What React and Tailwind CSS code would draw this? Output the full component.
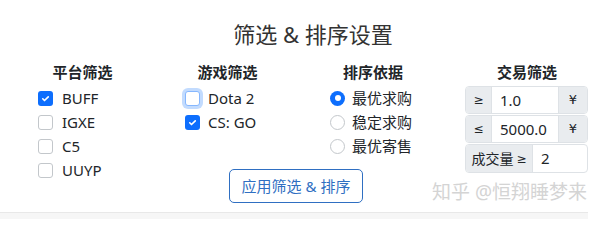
import React, { useState } from 'react';

const platforms = [
  { name: 'BUFF', checked: true },
  { name: 'IGXE', checked: false },
  { name: 'C5', checked: false },
  { name: 'UUYP', checked: false },
];

const games = [
  { name: 'Dota 2', checked: false, focus: true },
  { name: 'CS: GO', checked: true },
];

const sorts = ['最优求购', '稳定求购', '最优寄售'];

const symFont = { fontFamily: '"DejaVu Sans", "Noto Sans", sans-serif' };

function Check({ checked, focus }) {
  if (checked) {
    return (
      <span className="w-[15px] h-[15px] rounded-[3px] bg-[#0d6efd] flex items-center justify-center shrink-0">
        <svg viewBox="0 0 20 20" className="w-[11px] h-[11px]">
          <path d="M5 10.5l3.2 3.2L15 7" fill="none" stroke="white" strokeWidth="3" strokeLinecap="round" strokeLinejoin="round" />
        </svg>
      </span>
    );
  }
  return (
    <span
      className={`w-[15px] h-[15px] rounded-[3px] bg-white border shrink-0 ${
        focus ? 'border-[#86b7fe] shadow-[0_0_0_3px_rgba(13,110,253,0.25)]' : 'border-[#c3c7cb]'
      }`}
    />
  );
}

function Radio({ checked }) {
  if (checked) {
    return (
      <span className="w-[15px] h-[15px] rounded-full bg-[#0d6efd] flex items-center justify-center shrink-0">
        <span className="w-[6px] h-[6px] rounded-full bg-white" />
      </span>
    );
  }
  return <span className="w-[15px] h-[15px] rounded-full bg-white border border-[#c3c7cb] shrink-0" />;
}

function Header({ children }) {
  return <div className="h-[24px] mb-[2px] flex items-center justify-center font-bold text-[15px] text-[#212529]">{children}</div>;
}

export default function App() {
  const [sort] = useState('最优求购');

  return (
    <div
      className="w-[600px] h-[219px] bg-white relative flex flex-col text-[#212529] overflow-hidden"
      style={{ fontFamily: '"Noto Sans", "Noto Sans CJK SC", sans-serif' }}
    >
      {/* Title */}
      <div className="pt-[19px] pl-[26px] h-[49px] flex justify-center">
        <h4 className="text-[22px] leading-[30px] font-normal text-[#333]">筛选 &amp; 排序设置</h4>
      </div>

      <div className="mt-[11px] pl-[10px] grid grid-cols-[145px_145px_146px_154px]">
        {/* Platform */}
        <div className="row-span-2">
          <Header>平台筛选</Header>
          <div className="pl-[28px]">
            {platforms.map((p) => (
              <div key={p.name} className="h-[24px] flex items-center gap-[9px] text-[15px]">
                <Check checked={p.checked} />
                <span>{p.name}</span>
              </div>
            ))}
          </div>
        </div>

        {/* Game */}
        <div>
          <Header>游戏筛选</Header>
          <div className="pl-[30px]">
            {games.map((g) => (
              <div key={g.name} className="h-[24px] flex items-center gap-[8px] text-[15px]">
                <Check checked={g.checked} focus={g.focus} />
                <span>{g.name}</span>
              </div>
            ))}
          </div>
        </div>

        {/* Sort */}
        <div>
          <Header>排序依据</Header>
          <div className="pl-[30px]">
            {sorts.map((s) => (
              <div key={s} className="h-[24px] flex items-center gap-[7px] text-[15px]">
                <Radio checked={s === sort} />
                <span>{s}</span>
              </div>
            ))}
          </div>
        </div>

        {/* Trade */}
        <div className="row-span-2 pl-[8px]">
          <div className="w-[146px]">
            <Header>交易筛选</Header>
          </div>
          <div className="pl-[11px] w-[134px] flex flex-col gap-[1px] text-[15px]">
            <div className="flex h-[28px] border border-[#dee2e6] rounded-[4px] overflow-hidden">
              <span className="w-[26px] bg-[#e9ecef] border-r border-[#dee2e6] flex items-center justify-center text-[12px]" style={symFont}>≥</span>
              <span className="flex-1 flex items-center pl-[8px]">1.0</span>
              <span className="w-[29px] bg-[#e9ecef] border-l border-[#dee2e6] flex items-center justify-center text-[13px]" style={symFont}>¥</span>
            </div>
            <div className="flex h-[28px] border border-[#dee2e6] rounded-[4px] overflow-hidden">
              <span className="w-[26px] bg-[#e9ecef] border-r border-[#dee2e6] flex items-center justify-center text-[12px]" style={symFont}>≤</span>
              <span className="flex-1 flex items-center pl-[8px]">5000.0</span>
              <span className="w-[29px] bg-[#e9ecef] border-l border-[#dee2e6] flex items-center justify-center text-[13px]" style={symFont}>¥</span>
            </div>
            <div className="flex h-[29px] border border-[#dee2e6] rounded-[4px] overflow-hidden">
              <span className="w-[67px] bg-[#e9ecef] border-r border-[#dee2e6] flex items-center justify-center gap-[3px] text-[14px]">
                成交量<span className="text-[12px]" style={symFont}>≥</span>
              </span>
              <span className="flex-1 flex items-center pl-[8px]">2</span>
            </div>
          </div>
        </div>

        {/* Apply */}
        <div className="col-span-2 flex justify-center pr-[9px] mt-[11px]">
          <button className="h-[34px] px-[12px] border border-[#2f6fc2] rounded-[5px] text-[15px] text-[#2f6fc2] bg-white">
            应用筛选 &amp; 排序
          </button>
        </div>
      </div>

      {/* Watermark */}
      <div className="absolute left-[432px] top-[180px] text-[19px] leading-[24px] text-[#d4d4d4] whitespace-nowrap">
        知乎 @恒翔睡梦来
      </div>

      <div className="mt-auto w-[588px] h-[7px] border-t border-[#e8e8e8] bg-[#f6f6f6]" />
    </div>
  );
}
